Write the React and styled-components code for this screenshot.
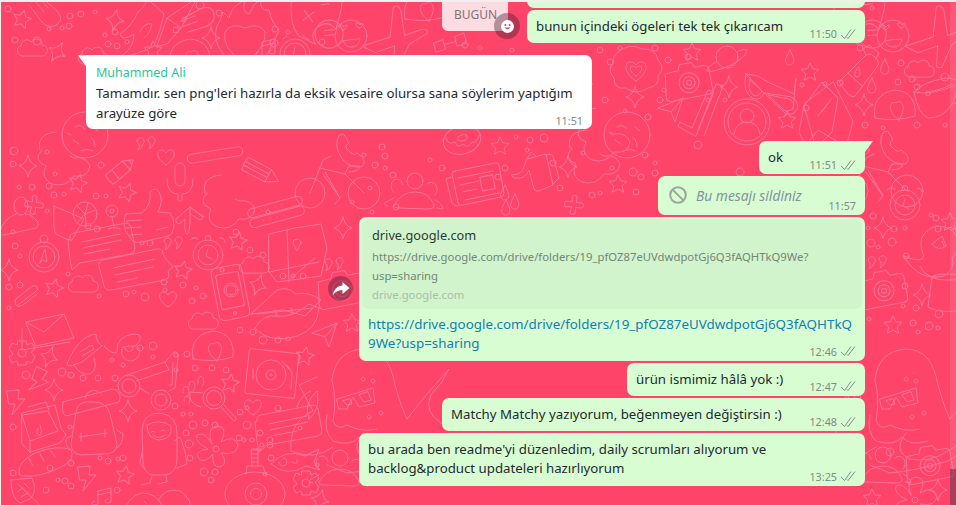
import React from 'react'
import styled, { createGlobalStyle } from 'styled-components'

const GlobalStyle = createGlobalStyle`
  html, body { margin: 0; padding: 0; height: 100%; overflow: hidden; }
  body { font-family: "Noto Sans", "Open Sans", sans-serif; background: #fe4469; }
`

const Chat = styled.div`
  position: relative;
  width: 956px;
  height: 505px;
  box-sizing: border-box;
  overflow: hidden;
  background: #fe4469;
  border-top: 2px solid #f1eef0;
  border-left: 1px solid #e6f3e4;
`

const Wallpaper = styled.svg`
  position: absolute;
  left: -1px;
  top: -2px;
  fill: none;
  stroke: #fb7496;
  stroke-width: 1;
  stroke-linecap: round;
  stroke-linejoin: round;
`

const Scrollbar = styled.div`
  position: absolute;
  top: -2px;
  right: 0;
  width: 6px;
  height: 505px;
  background: rgba(255, 255, 255, 0.1);
  &::after {
    content: '';
    position: absolute;
    left: 0;
    right: 0;
    bottom: 0;
    height: 36px;
    background: rgba(70, 30, 50, 0.45);
  }
`

const Messages = styled.div`
  position: relative;
  display: flex;
  flex-direction: column;
  padding: 0 91px 0 85px;
`

const Bubble = styled.div`
  position: relative;
  display: flex;
  flex-direction: column;
  box-sizing: border-box;
  width: ${p => p.$width}px;
  align-self: ${p => (p.$in ? 'flex-start' : 'flex-end')};
  margin-top: ${p => p.$gap ?? 2}px;
  padding: ${p => (p.$in ? '8px 9px 1px 10px' : '7px 9px 2px')};
  border-radius: 7px;
  background: ${p => (p.$in ? '#ffffff' : '#d9fdd3')};
  color: #1c2a30;
  font-size: 13.25px;
  line-height: 19.3px;
  white-space: nowrap;
  ${p => p.$in && 'border-top-left-radius: 0;'}
  ${p => p.$tail && !p.$in && 'border-top-right-radius: 0;'}
  ${p => p.$tail && `
    &::before {
      content: '';
      position: absolute;
      top: 0;
      width: 8px;
      height: 11px;
      background: inherit;
      ${p.$in
        ? 'left: -8px; clip-path: polygon(0 0, 100% 0, 100% 100%);'
        : 'right: -8px; clip-path: polygon(0 0, 100% 0, 0 100%);'}
    }
  `}
`

const Stub = styled.div`
  align-self: flex-end;
  width: 338px;
  height: 8px;
  margin-top: -2px;
  background: #d9fdd3;
  border-radius: 0 0 7px 7px;
`

const Sender = styled.div`
  color: #1fc79b;
  font-size: 12.5px;
  line-height: 19px;
  margin-bottom: 2px;
`

const Meta = styled.div`
  display: flex;
  align-items: center;
  gap: 3px;
  align-self: flex-end;
  height: 15px;
  margin-top: -10px;
  color: #7c8c86;
  font-size: 10.8px;
  line-height: 15px;
`

const Deleted = styled.div`
  display: flex;
  align-items: center;
  gap: 9px;
  margin: 2.5px 0 3px 2px;
  color: #84939a;
  font-size: 13.8px;
  font-style: italic;
`

const Preview = styled.div`
  margin: -5px -6px 0;
  padding: 7px 10px 5px;
  border-radius: 6px;
  background: #d1f4cc;
`

const PreviewTitle = styled.div`
  color: #2c3a36;
  font-size: 12.75px;
  line-height: 19px;
  margin-bottom: 2px;
`

const PreviewUrl = styled.div`
  color: #74867a;
  font-size: 11.3px;
  line-height: 19px;
`

const PreviewDomain = styled(PreviewUrl)`
  color: #a9c0a8;
`

const Link = styled.div`
  margin-top: 6px;
  color: #127eae;
  font-size: 13.4px;
`

const DateChip = styled.div`
  position: absolute;
  top: -2px;
  left: 441px;
  width: 66px;
  height: 31px;
  box-sizing: border-box;
  padding: 6px 0 0 12px;
  border-radius: 0 0 6px 6px;
  background: #fddbe2;
  color: #7d7479;
  font-size: 12px;
  line-height: 18px;
`

const RoundButton = styled.div`
  position: absolute;
  left: ${p => p.$x}px;
  top: ${p => p.$y}px;
  width: ${p => p.$size}px;
  height: ${p => p.$size}px;
  display: flex;
  align-items: center;
  justify-content: center;
  border-radius: 50%;
  background: rgba(70, 30, 50, 0.4);
`

const Check = () => (
  <svg width="16" height="12" viewBox="0 0 16 12" fill="none" stroke="#7f8f89" strokeWidth="1">
    <polyline points="1,7 4.5,10.5 11,1.5" />
    <polyline points="7,9.5 8,10.5 15,1.5" />
  </svg>
)

const Time = ({ children, read = true }) => (
  <Meta>
    {children}
    {read && <Check />}
  </Meta>
)

// wallpaper doodles, drawn around their own centre
const art = {
  star: <path d="M0-9 2.8-3.2 9-2.6 4.3 1.8 5.6 8.2 0 5-5.6 8.2-4.3 1.8-9-2.6-2.8-3.2Z" />,
  sparkle: <path d="M0-11Q1.5-2 9 0 1.5 2 0 11-1.5 2-9 0-1.5-2 0-11Z" />,
  heart: <path d="M0 8C-12 0-9-8-4-7-2-7-1-5 0-4 1-5 2-7 4-7 9-8 12 0 0 8Z" />,
  cloud: <path d="M-12 9C-18 8-18 0-13-1-13-7-6-9-3-5 0-10 9-8 8-2 15-2 15 8 9 9Z" />,
  quote: <path d="M-9-5A3.6 3.6 0 1 1-3-2Q-4 2-8 4-6 1-7-2-9-3-9-5ZM2-6A3.6 3.6 0 1 1 8-3Q7 1 3 3 5 0 4-3 2-4 2-6Z" />,
  crayon: <path d="M-15-6 7-6 16 0 7 6-15 6Q-17 0-15-6ZM7-6 7 6M-7-6-7 6M12-3 12 3" />,
  pencil: <path d="M-18-7 8-7 20 0 8 7-18 7Q-20 0-18-7ZM8-7 8 7M-18-2 8-2M-18 2 8 2" />,
  strip: <g><rect x="-28" y="-4.5" width="56" height="9" rx="4.5" /><path d="M-14 0h.1M-7 0h.1M0 0h.1M7 0h.1" /></g>,
  mic: <g><rect x="-5" y="-25" width="10" height="23" rx="5" /><path d="M-13-9Q-13 6 -2 6V12Q0 15 2 12V6Q13 6 13-9" /></g>,
  thumb: <path d="M-24-8-8-9Q2-18 0-30 4-36 9-30 14-22 8-10L20-9Q24-4 24 4 22 14 18 14L-8 20Q-14 22-18 18L-24 10Q-28 0-24-8ZM-24-1-9-2M-24 6-9 5M-20 13-8 12M6 8 18 5" />,
  chat: <g><path d="M-30-9Q-31-14-26-15L26-25Q30-25 31-21L35 0Q35 5 31 6L-20 15-28 22Q-30 14-32-8Z" /><path d="M-18-6 20-14M-17 0 21-8M-16 6 10 1" /></g>,
  chat2: <g><path d="M-36-6Q-37-11-32-12L22-23Q27-24 28-19L30-14 38-5 33-1 34 3Q34 7 30 8L-24 18Q-30 19-31 14Z" /><path d="M-22-4 20-13M-20 3 18-5M-18 10 2 6" /></g>,
  bike: <g><circle cx="-27" cy="3" r="15" /><circle cx="27" cy="3" r="16" /><path d="M-27 3-14-30-6-34M-17-22 8-16 27 3M-14-16 3 8-12-18M8-16 12-24 22-24Q24-19 12-18M3 8-2 14" /></g>,
  people: <g><path d="M-21 5Q-14-8 0-8 14-8 19 5 20 9 12 9L-16 8Q-22 8-21 5Z" /><circle cx="0" cy="-19" r="8" /><path d="M-21-8A6 7 0 1 1-12-15M12-16A6 7 0 1 1 20-5M-21-2-29 2Q-33 5-27 6M20 0Q27 3 28 9L22 8" /></g>,
  news: <g><path d="M-20-14 20-22Q23-23 24-20L29 8Q29 11 26 12L-12 20Q-16 21-17 18L-23-11Q-23-14-20-14Z" /><path d="M-23-8-29-6-23 18Q-20 22-16 21M-17-7 18-14M-15 0 4-4M-13 7 2 4M-10 15 24 8" /><rect x="6" y="-9" width="13" height="14" transform="rotate(-11 12 -2)" /></g>,
  teapot: <g><path d="M-8-13 11-18 18 13 4 19Q0 20-1 17L-6-2Q-10 8-21 6L-24 3Q-13 3-11-5Z" /><path d="M11-17Q18-20 19-12L24 6 17 13M-8-13-4-20 1-16" /></g>,
  donut: <g><ellipse cx="0" cy="0" rx="19" ry="14" transform="rotate(-15)" /><ellipse cx="1" cy="-2" rx="5" ry="3" transform="rotate(-15)" /><path d="M-16-2Q-14 6-7 2-4 9 1 4 6 9 10 2 14 4 18-6" /></g>,
  handset: <path d="M-14-14Q-20-5-11 9-2 18 8 17 14 13 9 7L4 3Q1 6-3 2L-7-2Q-7-6-4-7L-8-14Q-11-18-14-14Z" />,
  vinyl: <g><rect x="-25" y="-22" width="50" height="45" rx="2" transform="rotate(6)" /><circle cx="-1" cy="2" r="15" /><circle cx="-1" cy="2" r="5" /><circle cx="-1" cy="2" r="1" /><path d="M15-8 20 0 19 16M10-12 17-4M-19-4-19 6" /></g>,
  backpack: <g><path d="M-17-10Q-16-22 0-20 14-20 17-8L24 22Q24 33 8 32L-12 33Q-22 32-22 22Z" /><path d="M-30-20 20-33Q27-32 27-24L26-20-27-6Q-32-9-30-20ZM-8-24A9 9 0 0 1 8-28M-14 15 14 11M-12 11V19M12 7V15M24 8 30 12Q30 22 24 26M-22 14-27 17Q-28 25-22 28" /></g>,
  milk: <g><path d="M-19-9 14-17 20 6 25 13 19 21-11 30-19 22Z" transform="translate(-1 -3)" /><path d="M-19-10 6-14 16 6-12 16-20-10M-12 16-12 28M-14-18 4-23 7-15M-4 3Q-7 9-3 10 0 10-1 4L-2 0" /></g>,
  bread: <g><path d="M-26 12Q-28 0-10-9 14-18 26-12 30-4 20 3-4 16-22 14Z" /><path d="M-16-4Q-14 2-12 4M-5-8Q-3-4-1-1M6-11Q8-8 10-5" /></g>,
  leaf: <g><path d="M-11-10 10-12Q16 2 8 9L-2 13Q-11 8-11-10ZM-4-6 22 19M1-2-5 2M6 3-1 7M2-7 7-2" /></g>,
  astro: <g><path d="M-16-14Q-16-32 2-32 20-30 19-10L19 14Q19 27 8 30L-6 30Q-14 28-15 18Z" /><path d="M-11-20Q1-27 13-19 15-6 1-5-11-6-11-20ZM-7-13Q-5-15-3-13M3-14Q5-16 7-14M-5-10Q0-5 7-10M16-4 22-8Q28 6 29 19L19 23M-15 3-18 17-15 23M-6 31-8 38-17 40M8 30 9 37 0 39" /></g>,
  flower: <g><path d="M-3-5Q-9-20 1-23 14-23 6-7 20-15 23-4 22 7 6 4 14 15 5 18-4 18-2 5-11 15-16 10-22 2-7 0-21-7-18-14-10-18-3-5Z" /><circle r="3" cx="1" cy="0" /></g>,
  lens: <g><circle cx="6" cy="-2" r="11" /><circle cx="6" cy="-2" r="7.5" /><path d="M13 7 26 21Q29 20 28 18L16 5M-5-7-18-8Q-20 4-7 7M-19-13A3 5 0 1 1-15-9M-10-17A3 5 0 1 1-6-14M-25-7A3 5 0 1 1-21-4M-24 1A3 4 0 1 1-19 3" /></g>,
  fish: <g><path d="M-24 4Q-10-12 10-4L24-11 19 2 25 10 11 6Q-8 18-24 4Z" /><path d="M-12-2A4 4 0 1 1-16 2M-3 2Q4 6 2 0" /></g>,
  sub: <g><ellipse cx="0" cy="12" rx="30" ry="22" /><circle cx="1" cy="12" r="11" /><circle cx="1" cy="12" r="5.5" /><path d="M-9-8-8-16 8-16 11-6M-3-16-4-32H3L3-16M-4-28H3M-4-24H3M-4-20H3M-3-33 6-33" /></g>,
  glasses: <g><circle cx="-21" cy="-1" r="11" /><circle cx="-21" cy="-1" r="7" /><circle cx="11" cy="13" r="10" /><circle cx="11" cy="13" r="6" /><path d="M-10 1-1 7M-26-11 15-25 19-17-14-6M19-2 22-2 23-25M15-25 24-35Q28-36 28-30L25 1 19 4" /></g>,
  scooter: <g><path d="M-33 16Q-22-12-4-14-4-6 2-2L-18 14-30 18ZM-20 4-8-3-6 1-18 8" /><path d="M4-2Q14 8 17 4 16-12 34-14 46-14 36-2 22-2 22 0M-26 17Q-20 28-10 26-2 22-6 10M22 1A9 9 0 1 0 38-1M25 0A3 3 0 1 0 33-1" /></g>,
  gear: <g><path d="M-4-12 4-12 5-8 10-10 13-4 9-1 13 4 10 10 5 8 4 12-4 12-5 8-10 10-13 4-9 1-13-4-10-10-5-8Z" /><circle r="4" /></g>,
  bolt: <path d="M-8-11 4-12 3-3 10-3-3 13 0 2-6 2Z" />,
  person: <g><ellipse cx="-1" cy="-12" rx="7" ry="9" /><path d="M-6-4Q-20 2-22 14-22 18-18 17L14 10Q18 8 15 3 8-5 3-4" /></g>,
  cross: <path d="M-3-8Q0-11 2-8L2-3 8-3Q11 0 8 2L2 2 2 8Q0 11-3 8L-2 2-8 3Q-11 0-8-3L-2-3Z" transform="rotate(8)" />,
  drink: <g><path d="M-16-16 14-3 2 18Q-1 19-14 12-17 10-16-16Z" /><circle cx="15" cy="-8" r="12" /><path d="M15-8 7-16M15-8 25-12M15-8 16 3M15-8 7 1M15-8 18-19M-5 3h.1M0 7h.1M-8 10h.1" /></g>,
  pin: <g><circle cx="0" cy="-6" r="6" /><circle cx="0" cy="-6" r="2" /><path d="M0 0 2 10M-4 12Q2 9 8 12" /></g>,
  arrow: <path d="M-14-2 0-14 14-4M0-14 0 2Q-1 14-3 13-6 12-5-2L-11 3Q-15 2-14-2M0-14 12-5Q14-2 10-1L2-6" />,
  watch: <g><circle r="15" /><circle r="10" /><path d="M0-6-2 1 4 4M-18-15Q-14-19-10-16M12-17Q17-17 17-13M-3-15-2-19H2L3-15" /></g>,
  map: <g><path d="M-26-14 0-20 26-24 32 0 26 28-18 34-26 24Z" /><path d="M-8-18-6 34M6-5 2 3-2-5A4 4 0 1 1 6-5ZM20 10-4 30M-26 24-6 20 24 14" /></g>,
  compass: <g><circle r="15" /><circle r="11" /><circle cx="0" cy="-18" r="4" /><path d="M-4 6 1-8 3 5-1 3Z" /></g>,
  clip: <path d="M-9 7 8-6Q12-8 10-11 8-14 4-11L-11 1Q-13 4-11 7-8 10-4 7L10-4" />,
  phone: <g><rect x="-15" y="-27" width="31" height="53" rx="5" transform="rotate(-11)" /><rect x="-11" y="-20" width="23" height="35" rx="2" transform="rotate(-11)" /><circle cx="1" cy="-3" r="7" /><circle cx="1" cy="-3" r="5" /><circle cx="5" cy="20" r="1.5" /></g>,
  lips: <g><path d="M-34 6-8-18Q4-22 10-14 24-17 36-8L20 8-2 2Z" /><path d="M-30 20Q-22 6-8 8 8 10 24-4L34 0Q32 22 12 28-16 36-30 20ZM-28 6 28 0M-10 2-8 8M6 0 8 6" /></g>,
  mail: <g><path d="M-24-12 14-20 24 4-14 12Z" /><path d="M-24-12-6-2 14-20M-28-6V16L20 8" /></g>,
  planet: <g><circle r="11" /><path d="M-10 4Q-22 12-20 14-14 16 4 8 22-2 20-7 17-9 10-5" /></g>,
  bigCloud: <g><path d="M-18-18Q-6-28 6-21 20-22 22-10 30-2 22 6 24 16 12 18 0 26-10 18-22 20-22 8-30 0-22-8-24-14-18-18Z" /><path d="M0 11C-14 2-11-9-5-8-2-8-1-6 0-5 1-6 2-8 5-8 11-9 14 2 0 11ZM0 6C-7 1-7-4-4-4-2-4-1-3 0-2 1-3 2-4 4-4 7-4 7 1 0 6Z" /></g>,
  camera: <g><path d="M-21-10-8-12-6-18 6-19 9-14 18-15Q22-15 23-11L25 10Q25 14 21 14L-17 18Q-22 18-22 14Z" /><circle cx="2" cy="1" r="10" /><circle cx="2" cy="1" r="6" /><circle cx="2" cy="1" r="2.5" /></g>,
  shades: <g><path d="M-26-16-8 3Q-12 12-20 8-30 1-26-16ZM-8 3 14 24Q24 26 26 16 24 6 14 6Z" /><path d="M-26-16-14-14-4-8 22 4 24-12 21 20M-22-10-10 1Q-14 8-19 5-25 0-22-10ZM-4 5 13 21Q20 22 22 15 20 8 12 8Z" /></g>,
  bottle: <g><path d="M-10 20-18 9 9-18Q14-21 20-14 23-9 20-6L-2 23Q-6 25-10 20ZM-9 0 6 14M9-18 6-24 12-28 22-20 19-14" /><path d="M0-4Q-5 3 0 4 4 3 3-2L1-6" /></g>,
  drop: <path d="M0-8Q-6 2-4 5-2 8 1 7 4 6 4 2 3-2 0-8Z" />,
  cup: <g><path d="M-22-6Q-14-16 10-20 22-20 22-14 20-2 16 6 8 20-8 20-18 16-22-6Z" /><path d="M-22-6Q-4-2 22-14M-10-6Q6-8 16-14M20-10Q28-10 28-4 26 4 17 6" /></g>,
  envelope: <g><path d="M-30 18-24-14 8-38 30 6 22 36-14 48Z" transform="translate(0 -4) scale(.9)" /><path d="M-22-14-4-38 12-22 6 12-10 28 -22-14ZM-4-8 6-22M-8-4 2-17M-24 30-8 10 22 28" /></g>,
  check: <path d="M-24 14-22 10-10 16 6-22 12-20-6 24ZM-4 18 14-28 21-26 2 24" />,
  avatar: <g><circle r="23" /><circle r="19" /><circle cy="-6" r="7" /><path d="M-13 12Q-11 0 0 0 11 0 13 12" /></g>,
  plane: <path d="M-13-2 12-12 4 12 0 2Z M12-12 0 2" />,
  cookie: <g><circle r="23" /><path d="M-10-8Q-5-12 0-6M-12 5-6 9M8-8 13-4M-4 16Q2 13 8 16M6 2Q10 6 10 12M-18-2-14 0" /></g>,
  girl: <path d="M-20-22Q-24-38-4-40M-18-22Q-28-12-14-6-20 6-8 12 6 16 14 4 28 6 30-6 26-16 14-14L10-16" />,
  duck: <g><path d="M-28 6Q-10 14-8 6-18-16 4-24 24-24 26-8 26 4 20 8 24 18 12 26-14 32-28 6Z" /><path d="M0-6 10-14 14-4Q6 2 0-6ZM-12 16Q-8 26 4 28M10-9 12-4" /></g>,
  hat: <g><ellipse cx="6" cy="-18" rx="16" ry="3" /><path d="M-10-18-14 12Q-4 18 14 16" /></g>,
  octopus: <g><path d="M-45-5Q-42-34-14-36 12-36 18 0 24 22 30 34M-45-5Q-40 14-44 36-40 46-30 40-14 48 0 44M-50 30Q-54 46-44 56-26 62-18 52-10 62 8 56M-14 48Q-28 66-10 74 10 78 28 66 44 54 62 56 46 64 28 76-6 86-30 88L-50 80M30 34Q48 10 72-16 66-2 54 10 46 26 64 38 80 46 84 26" /><path d="M-40 14-4 3-2 18-18 22-24 12-30 24-38 24ZM-34 16-30 20-25 19-27 14ZM-18 10-13 17-6 15-9 7ZM-60-8-78 0-64 26Q-88 36-86 66-62 76-44 62M-80 22Q-76 10-66 6" /><path d="M-68 34Q-56 24-60 6-74 18-68 34ZM-6-12h.1M-14-8a2 2 0 1 0 .1 0M-4-6a2 2 0 1 0 .1 0M4 26a2 2 0 1 0 .1 0M-8 30a2 2 0 1 0 .1 0" /></g>,
  flame: <path d="M-24 30Q-8 22-8 6-20 14-22 6-10-2-4-16 6-24 4-30 14-22 22-14 18 4 12 18-2 26-24 30ZM-2 4Q2-6 10-4 8 6 2 10" />,
  kite: <path d="M-16 22-6-6 24-26 8 4-6 20ZM-6-6 8 4" />,
  hand: <path d="M-16-8-4 8Q4 16 12 10 18 4 10-4L-4-16M-12-14-2-2M-8-18 2-6" />,
  flameHeart: <g><path d="M0 36Q-36 14-28-10-24-16-22-24-18-20-16-18-14-30 0-36-4-24 4-22 8-32 16-38 14-24 24-26 26-14 34-6 28 8 18 26 0 36Z" /><path d="M0 28Q-24 12-20-4-14-14 0-8 14-14 20-4 22 10 0 28Z" /></g>,
  tablet: <g><path d="M-22-22 20-28Q26-24 24-10L22 6Q12-2 4 6-4 14 4 24L-14 18Q-26 6-26-18Z" /><circle cx="16" cy="12" r="14" /><path d="M11 9 20 7M12 14 21 12M-12-8-2 2M-2-8-12 2M4-16 12-18" /></g>,
  love: <g><circle r="16" /><path d="M-8-6C-13-9-11-12-9-11L-7-9-5-11C-3-11-3-8-8-6ZM8-8C3-11 5-14 7-13L9-11 11-13C13-13 13-10 8-8ZM-8 5Q0 3 9 3 7 12 0 11-6 11-8 5Z" /></g>,
  airplane: <path d="M-32 14-6 0-8-30Q-4-34 0-28L8-4 22-12Q30-16 30-10L14 4 8 28Q2 32 2 24L0 8-18 18Z" />,
  alarm: <g><circle r="15" /><circle r="11" /><path d="M0-7-2 2 3 6M-12-15-8-18M8-18 14-14" /></g>,
  note: <path d="M-6 6V-6L7-9V4M-6 6A3 2 0 1 1-9 4M7 4A3 2 0 1 1 4 2M-6-2 7-5" />,
  blob: <g><path d="M-20 12Q-24-12 0-16 22-14 20 10 0 16-20 12Z" /><path d="M4 14C-10 4-4-6 1-3 4-7 14-3 4 14Z" /></g>,
  dumbbell: <path d="M-16-4-6-5-6 5-16 5ZM6-5 16-6 16 4 6 5ZM-6 0 6 0" />,
  hands: <g><path d="M-28 22Q-22 0-8-2 6-2 12 10 2 10-2 22M8 6Q14-8 30-4 42 2 42 22M-6 6Q0 12 4 22" /></g>,
}

const placed = [
  ['star', 22, 19, 15], ['hand', 46, 14, 0], ['sparkle', 115, 20, 10], ['flame', 142, 28, 0], ['kite', 173, 24, 0], ['hand', 200, 20, -70],
  ['flameHeart', 245, 36, 0], ['sparkle', 211, 38, 0], ['tablet', 315, 20, 8], ['love', 351, 36, 0], ['airplane', 396, 38, 10], ['blob', 425, 7, 0],
  ['cloud', 34, 47, 0], ['sparkle', 57, 52, 30], ['star', 153, 50, 0], ['note', 268, 48, 0], ['alarm', 295, 54, 0], ['blob', 190, 55, 0],
  ['dumbbell', 450, 43, -15], ['cloud', 95, 55, 0],
  ['tablet', 858, 20, 8], ['love', 893, 36, 0], ['airplane', 939, 38, 10],

  ['bigCloud', 636, 70, 0], ['camera', 687, 82, -5], ['planet', 727, 57, 0], ['drop', 790, 58, 0], ['star', 810, 72, 0], ['star', 692, 52, 0],
  ['shades', 772, 90, 0], ['bottle', 857, 73, 0], ['drop', 885, 67, 0], ['drop', 872, 86, 0], ['cloud', 921, 68, 0], ['cup', 936, 98, 0],
  ['sparkle', 729, 87, 0], ['envelope', 826, 120, 0], ['sparkle', 864, 105, 0], ['blob', 895, 106, 0], ['check', 702, 112, 0], ['avatar', 747, 122, 0],
  ['plane', 671, 110, 0], ['star', 787, 120, 0], ['sparkle', 635, 97, 0], ['handset', 897, 147, 0], ['cookie', 627, 135, 0], ['girl', 600, 148, 0],
  ['bike', 880, 188, 0],

  ['girl', 60, 172, 0], ['cookie', 85, 135, 0], ['sparkle', 28, 166, 0], ['crayon', 121, 170, -40], ['quote', 146, 146, 0], ['heart', 166, 157, 0],
  ['strip', 215, 155, -9], ['pencil', 261, 172, 28], ['mic', 180, 188, 0], ['thumb', 150, 222, 0], ['star', 78, 183, 15], ['star', 127, 192, 20],
  ['girl', 225, 215, 0], ['person', 22, 218, 0], ['cross', 34, 205, 0], ['drink', 70, 222, 0], ['pin', 112, 217, 0], ['chat', 100, 248, 0],
  ['chat2', 135, 272, 0], ['arrow', 190, 221, 0], ['quote', 173, 246, 0], ['watch', 208, 255, 0], ['star', 183, 270, 10], ['star', 238, 241, 10],
  ['cloud', 256, 264, 0], ['map', 295, 248, 0], ['compass', 44, 257, 0], ['sparkle', 9, 270, 0], ['cloud', 85, 283, 0], ['star', 54, 288, 15],
  ['clip', 27, 298, 0], ['phone', 230, 293, 0], ['sparkle', 258, 285, 20], ['lips', 285, 308, 0], ['heart', 168, 299, 0], ['strip', 275, 207, -15], ['strip', 277, 217, -15],

  ['mail', 50, 334, 0], ['gear', 22, 353, 0], ['sparkle', 49, 357, 20], ['scooter', 100, 348, 0], ['glasses', 150, 387, 0], ['bolt', 38, 380, 30],
  ['sparkle', 54, 390, 0], ['bolt', 15, 402, 0], ['milk', 42, 425, 0], ['backpack', 93, 422, 0], ['sparkle', 128, 411, 0], ['astro', 158, 445, 0],
  ['lens', 208, 400, 0], ['star', 230, 383, 10], ['vinyl', 272, 373, 0], ['heart', 253, 407, 0], ['chat', 287, 430, 0], ['flower', 215, 449, 0],
  ['bread', 45, 462, 0], ['bolt', 86, 478, 0], ['star', 125, 475, 10], ['leaf', 22, 490, 0], ['note', 104, 497, 0], ['hands', 150, 495, 0],
  ['sub', 255, 482, 0], ['fish', 295, 460, 0], ['gear', 306, 483, 0], ['people', 340, 477, 0], ['sparkle', 320, 500, 15], ['blob', 213, 347, 0],
  ['plane', 325, 335, 0], ['star', 305, 356, 10], ['cloud', 205, 320, 0], ['octopus', 377, 385, 0],

  ['bike', 337, 190, 0], ['handset', 353, 150, 0], ['donut', 462, 140, 0], ['star', 500, 146, 0], ['news', 475, 185, 0], ['teapot', 535, 172, 0],
  ['drop', 505, 193, 0], ['drop', 515, 202, 0], ['drop', 506, 208, 0], ['sparkle', 568, 167, 0], ['people', 415, 200, 0], ['girl', 590, 170, 0],
  ['star', 618, 184, 0], ['cross', 574, 205, 0], ['sparkle', 343, 228, 0], ['quote', 334, 267, 0], ['camera', 340, 290, -5], ['star', 352, 323, 0],

  ['watch', 905, 205, 0], ['duck', 932, 250, 0], ['sparkle', 883, 228, 0], ['quote', 877, 265, 0], ['camera', 882, 290, -5], ['sparkle', 922, 295, 0],
  ['hat', 942, 295, 0], ['star', 893, 325, 0], ['octopus', 920, 385, 0], ['people', 883, 474, 0], ['camera', 928, 465, -5], ['sparkle', 938, 490, 0],
  ['flower', 914, 500, 0], ['star', 950, 222, 0], ['star', 872, 498, 0],
]

const dots = [
  [8, 9, 3], [37, 41, 4], [62, 28, 2], [70, 16, 3], [81, 14, 3], [95, 12, 2], [49, 29, 2], [69, 26, 3], [15, 40, 3], [105, 35, 2], [115, 32, 3],
  [108, 44, 3], [117, 46, 3], [127, 42, 2], [176, 30, 3], [184, 20, 2], [219, 13, 3], [200, 5, 4], [275, 29, 3], [288, 32, 2], [274, 43, 4], [322, 42, 3],
  [14, 151, 4], [13, 164, 3], [47, 152, 2], [101, 165, 3], [55, 174, 2], [32, 187, 3], [19, 187, 2], [49, 186, 3], [54, 195, 3], [64, 194, 2], [96, 196, 3],
  [106, 196, 2], [13, 232, 2], [47, 211, 2], [88, 226, 3], [97, 229, 3], [142, 243, 2], [150, 243, 3], [15, 246, 3], [20, 256, 2], [9, 287, 3], [20, 285, 3],
  [9, 308, 2], [68, 274, 2], [99, 296, 2], [126, 294, 3], [134, 292, 2], [145, 297, 4], [165, 290, 2], [164, 282, 3], [183, 285, 3], [196, 288, 2], [203, 296, 3],
  [192, 301, 3], [236, 232, 3], [263, 255, 3], [250, 250, 3], [283, 276, 3], [293, 276, 2], [303, 276, 3], [268, 212, 2], [222, 270, 2],
  [240, 330, 3], [253, 332, 3], [263, 340, 4], [278, 340, 3], [288, 339, 2], [153, 346, 4], [153, 357, 2], [140, 348, 3], [112, 360, 2], [123, 365, 2],
  [176, 355, 2], [187, 354, 3], [176, 370, 2], [195, 368, 3], [212, 368, 3], [226, 370, 3], [26, 375, 4], [62, 372, 4], [71, 375, 3], [83, 378, 3], [98, 378, 3],
  [115, 378, 3], [175, 406, 3], [183, 414, 2], [191, 414, 2], [193, 425, 4], [205, 423, 3], [186, 433, 3], [215, 425, 3], [240, 412, 3], [247, 408, 2], [278, 408, 3],
  [247, 425, 4], [260, 433, 3], [239, 438, 3], [244, 440, 2], [252, 440, 2], [270, 445, 3], [262, 445, 2], [189, 444, 4], [190, 458, 3], [270, 440, 3], [271, 458, 3],
  [317, 465, 2], [265, 474, 2], [204, 472, 4], [215, 472, 3], [211, 480, 3], [71, 486, 3], [58, 480, 2], [65, 481, 3], [50, 468, 3], [13, 473, 3], [46, 490, 3], [71, 463, 3],
  [300, 428, 2], [13, 427, 3], [70, 427, 2], [118, 459, 2], [123, 458, 3], [108, 461, 3], [100, 458, 2], [117, 490, 3],
  [382, 147, 3], [375, 165, 3], [364, 155, 2], [385, 156, 3], [393, 175, 3], [385, 168, 2], [442, 168, 3], [430, 160, 2], [498, 177, 3], [516, 137, 2],
  [527, 150, 2], [530, 140, 3], [544, 138, 4], [553, 163, 3], [505, 168, 3], [583, 153, 2], [592, 195, 3], [560, 188, 3], [600, 193, 2], [633, 172, 4], [636, 192, 3],
  [645, 155, 3], [655, 163, 2], [655, 173, 3], [660, 183, 2], [370, 188, 2], [396, 207, 3], [372, 212, 2], [352, 202, 2],
  [698, 145, 4], [641, 177, 3], [612, 168, 2], [740, 172, 4], [610, 62, 3], [590, 84, 2], [668, 60, 3], [664, 90, 2], [688, 57, 3], [708, 100, 2], [605, 100, 3],
  [625, 111, 2], [648, 117, 3], [660, 100, 3], [725, 100, 2], [802, 85, 2], [825, 84, 2], [806, 108, 3], [840, 83, 3], [901, 63, 3], [917, 87, 3], [912, 79, 3],
  [928, 94, 2], [945, 77, 4], [865, 125, 3], [898, 82, 3], [917, 125, 3], [945, 125, 2], [865, 150, 4], [883, 128, 2],
  [873, 216, 3], [868, 228, 2], [871, 243, 4], [878, 247, 2], [892, 242, 4], [894, 229, 3], [905, 228, 2], [906, 256, 3], [931, 215, 2], [938, 229, 3],
  [936, 218, 3], [905, 286, 3], [903, 306, 2], [916, 308, 3], [939, 314, 4], [913, 323, 3], [929, 326, 4], [918, 332, 2], [938, 328, 2], [869, 319, 2], [890, 452, 4],
  [465, 45, 3], [480, 48, 2], [512, 50, 2], [600, 50, 3], [620, 48, 2], [655, 48, 3], [872, 8, 2], [860, 48, 3],
]

const Doodles = () => (
  <Wallpaper width="956" height="505" viewBox="0 0 956 505">
    {placed.map(([name, x, y, r], i) => (
      <g key={i} transform={`translate(${x} ${y}) rotate(${r})`}>{art[name]}</g>
    ))}
    {dots.map(([x, y, r], i) => <circle key={i} cx={x} cy={y} r={r} />)}
  </Wallpaper>
)

const Blocked = () => (
  <svg width="18" height="18" viewBox="0 0 18 18" fill="none" stroke="#9aa89a" strokeWidth="2">
    <circle cx="9" cy="9" r="7.8" />
    <path d="M3.6 3.6 14.4 14.4" />
  </svg>
)

const Smile = () => (
  <svg width="13" height="13" viewBox="0 0 13 13">
    <circle cx="6.5" cy="6.5" r="6.5" fill="#fff" />
    <circle cx="4.4" cy="5" r="1" fill="#b94a64" />
    <circle cx="8.6" cy="5" r="1" fill="#b94a64" />
    <path d="M3.6 7.6Q6.5 11 9.4 7.6Z" fill="#b94a64" />
  </svg>
)

const Forward = () => (
  <svg width="18" height="16" viewBox="0 0 18 16">
    <path d="M10.5 1 17.5 7 10.5 13V9.3C6 9.3 3 10.8.8 14.5 1.5 9 4.5 5 10.5 4.4Z" fill="#fff" />
  </svg>
)

export default function App() {
  return (
    <>
      <GlobalStyle />
      <Chat>
        <Doodles />
        <Messages>
          <Stub />
          <Bubble $width={338}>
            bunun içindeki ögeleri tek tek çıkarıcam
            <Time>11:50</Time>
          </Bubble>
          <Bubble $in $tail $width={506} $gap={12}>
            <Sender>Muhammed Ali</Sender>
            Tamamdır. sen png'leri hazırla da eksik vesaire olursa sana söylerim yaptığım
            <br />
            arayüze göre
            <Time read={false}>11:51</Time>
          </Bubble>
          <Bubble $tail $width={106} $gap={12}>
            ok
            <Time>11:51</Time>
          </Bubble>
          <Bubble $width={207}>
            <Deleted>
              <Blocked />
              Bu mesajı sildiniz
            </Deleted>
            <Time read={false}>11:57</Time>
          </Bubble>
          <Bubble $width={506}>
            <Preview>
              <PreviewTitle>drive.google.com</PreviewTitle>
              <PreviewUrl>https://drive.google.com/drive/folders/19_pfOZ87eUVdwdpotGj6Q3fAQHTkQ9We?</PreviewUrl>
              <PreviewUrl>usp=sharing</PreviewUrl>
              <PreviewDomain>drive.google.com</PreviewDomain>
            </Preview>
            <Link>
              https://drive.google.com/drive/folders/19_pfOZ87eUVdwdpotGj6Q3fAQHTkQ
              <br />
              9We?usp=sharing
            </Link>
            <Time>12:46</Time>
          </Bubble>
          <Bubble $width={238}>
            ürün ismimiz hâlâ yok :)
            <Time>12:47</Time>
          </Bubble>
          <Bubble $width={423}>
            Matchy Matchy yazıyorum, beğenmeyen değiştirsin :)
            <Time>12:48</Time>
          </Bubble>
          <Bubble $width={506}>
            bu arada ben readme'yi düzenledim, daily scrumları alıyorum ve
            <br />
            backlog&product updateleri hazırlıyorum
            <Time>13:25</Time>
          </Bubble>
        </Messages>
        <DateChip>BUGÜN</DateChip>
        <RoundButton $x={493} $y={11} $size={26}><Smile /></RoundButton>
        <RoundButton $x={327} $y={274} $size={25}><Forward /></RoundButton>
        <Scrollbar />
      </Chat>
    </>
  )
}
